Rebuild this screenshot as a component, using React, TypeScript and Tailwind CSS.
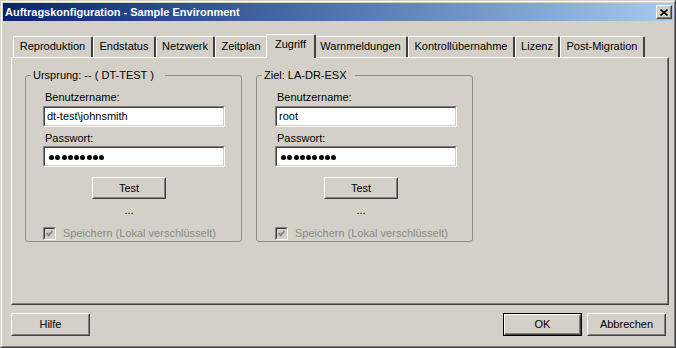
import React from 'react';

const tabs = [
  { label: 'Reproduktion', w: 'w-[80px]' },
  { label: 'Endstatus', w: 'w-[63px]' },
  { label: 'Netzwerk', w: 'w-[59px]' },
  { label: 'Zeitplan', w: 'w-[53px]' },
  { label: 'Zugriff', w: 'w-[50px]', active: true },
  { label: 'Warnmeldungen', w: 'w-[94px]' },
  { label: 'Kontrollübernahme', w: 'w-[107px]' },
  { label: 'Lizenz', w: 'w-[45px]' },
  { label: 'Post-Migration', w: 'w-[85px]' },
];

const Button = ({ label, className = '', isDefault = false }: { label: string; className?: string; isDefault?: boolean }) => (
  <div className={`${className} ${isDefault ? 'border border-black' : ''}`}>
    <button className="flex h-full w-full border border-t-white border-l-white border-r-[#404040] border-b-[#404040] bg-[#d4d0c8] p-0 text-[11px] leading-[13px] text-black">
      <span className="flex h-full w-full items-center justify-center border border-t-[#d4d0c8] border-l-[#d4d0c8] border-r-[#808080] border-b-[#808080]">
        {label}
      </span>
    </button>
  </div>
);

const Field = ({ children }: { children: React.ReactNode }) => (
  <div className="h-[21px] w-[182px] border border-t-[#808080] border-l-[#808080] border-b-white border-r-white">
    <div className="flex h-full w-full items-center border border-t-[#404040] border-l-[#404040] border-b-[#d4d0c8] border-r-[#d4d0c8] bg-white px-[1px] text-[11px] leading-[13px] text-black">
      {children}
    </div>
  </div>
);

const Dots = () => (
  <div className="flex items-center gap-[1.25px] pl-[3px] pt-[2px]">
    {Array.from({ length: 9 }).map((_, i) => (
      <span key={i} className="block h-[5px] w-[5px] rounded-full bg-black" />
    ))}
  </div>
);

const CredGroup = ({ title, user, legendPad, shift }: { title: string; user: string; legendPad: string; shift: string }) => (
  <fieldset className="m-0 h-[173px] w-[217px] rounded-[3px] border border-[#8c8c8c] p-0">
    <legend className={`ml-[5px] pl-[2px] ${legendPad} text-[11px] leading-[13px] text-black`}>{title}</legend>
    <div className={`flex flex-col ${shift}`}>
      <div className="ml-[2px] mt-[9px] text-[11px] leading-[13px]">Benutzername:</div>
      <div className="mt-[2px]">
        <Field>
          <span className="pl-[1px]">{user}</span>
        </Field>
      </div>
      <div className="ml-[2px] mt-[5px] text-[11px] leading-[13px]">Passwort:</div>
      <div className="mt-[1px]">
        <Field>
          <Dots />
        </Field>
      </div>
      <Button label="Test" className="ml-[49px] mt-[10px] h-[22px] w-[74px]" />
      <div className="ml-[49px] mt-[5px] w-[74px] text-center text-[11px] leading-[13px]">...</div>
      <div className="mt-[10px] flex items-center gap-[7px]">
        <div className="h-[13px] w-[13px] border border-t-[#808080] border-l-[#808080] border-b-white border-r-white">
          <div className="flex h-full w-full items-center justify-center border border-t-[#404040] border-l-[#404040] border-b-[#d4d0c8] border-r-[#d4d0c8] bg-[#d4d0c8]">
            <svg width="7" height="7" viewBox="0 0 7 7">
              <path d="M0.5 3 L2.6 5.3 L6.6 0.9" fill="none" stroke="#808080" strokeWidth="1.8" />
            </svg>
          </div>
        </div>
        <span className="text-[11px] leading-[13px] text-[#8a8a8a]">Speichern (Lokal verschlüsselt)</span>
      </div>
    </div>
  </fieldset>
);

export default function App() {
  return (
    <div className="h-[348px] w-[676px] border border-t-[#d4d0c8] border-l-[#d4d0c8] border-r-[#404040] border-b-[#404040] bg-[#d4d0c8] font-['Tahoma','Liberation_Sans',Arial,sans-serif] text-black">
      <div className="flex h-full w-full flex-col border border-t-white border-l-white border-r-[#808080] border-b-[#808080] p-[1px]">
        <div className="flex h-[18px] items-center justify-between bg-linear-to-r from-[#0a246a] to-[#a6caf0] pl-[2px] pr-[1px]">
          <span className="text-[11px] font-bold leading-[13px] text-white">Auftragskonfiguration - Sample Environment</span>
          <div className="h-[14px] w-[16px] border border-t-white border-l-white border-r-[#404040] border-b-[#404040] bg-[#d4d0c8]">
            <div className="flex h-full w-full items-center justify-center border border-t-[#d4d0c8] border-l-[#d4d0c8] border-r-[#808080] border-b-[#808080]">
              <svg width="8" height="7" viewBox="0 0 8 7">
                <path d="M0.5 0.5 L7.5 6.5 M7.5 0.5 L0.5 6.5" stroke="black" strokeWidth="1.6" />
              </svg>
            </div>
          </div>
        </div>

        <div className="flex flex-1 flex-col pl-[8px] pr-[4px] pt-[13px]">
          <div className="flex h-[23px] items-end pl-[2px]">
            {tabs.map((t) =>
              t.active ? (
                <div
                  key={t.label}
                  className={`relative z-10 -mx-[2px] -mb-[1px] h-[24px] ${t.w} rounded-t-[2px] border-l border-t border-r-2 border-l-white border-t-white border-r-[#404040] bg-[#d4d0c8] pt-[3px] text-center text-[11px] leading-[13px]`}
                >
                  {t.label}
                </div>
              ) : (
                <div
                  key={t.label}
                  className={`h-[21px] ${t.w} rounded-t-[2px] border-l border-t border-r-2 border-l-white border-t-white border-r-[#404040] pt-[3px] text-center text-[11px] leading-[13px]`}
                >
                  {t.label}
                </div>
              )
            )}
          </div>
          <div className="h-[248px] border border-t-white border-l-white border-r-[#404040] border-b-[#404040]">
            <div className="flex h-full w-full gap-[14px] border-r border-b border-r-[#808080] border-b-[#808080] pl-[13px] pt-[11px]">
              <CredGroup title="Ursprung: -- ( DT-TEST )" user="dt-test\johnsmith" legendPad="pr-[11px]" shift="pl-[17px]" />
              <CredGroup title="Ziel: LA-DR-ESX" user="root" legendPad="pr-[8px]" shift="pl-[18px]" />
            </div>
          </div>
          <div className="mr-[3px] mt-[8px] flex items-start">
            <Button label="Hilfe" className="h-[23px] w-[79px]" />
            <div className="flex-1" />
            <Button label="OK" className="h-[23px] w-[79px]" isDefault />
            <Button label="Abbrechen" className="ml-[5px] h-[23px] w-[79px]" />
          </div>
        </div>
      </div>
    </div>
  );
}
